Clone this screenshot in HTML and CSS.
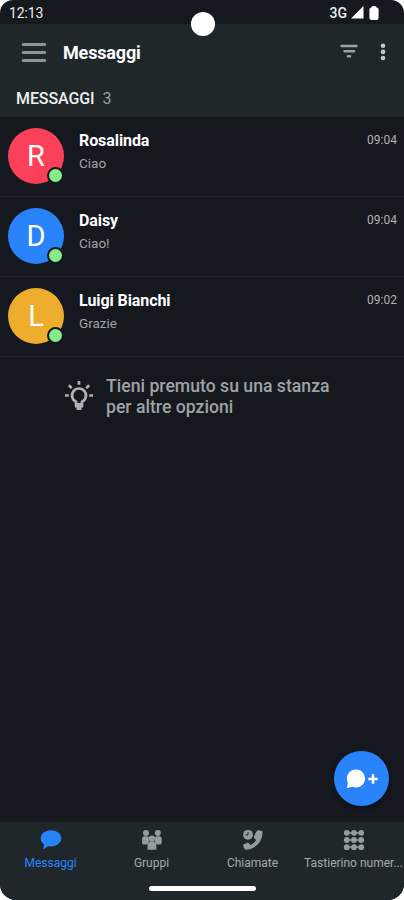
FILE: index.html
```html
<!DOCTYPE html>
<html lang="it">
<head>
<meta charset="utf-8">
<title>Messaggi</title>
<link rel="stylesheet" href="styles.css">
</head>
<body>
<div class="phone">
  <div class="status">
    <span class="clock">12:13</span>
    <span class="camera"></span>
    <span class="network">3G</span>
    <svg class="signal" width="13" height="13" viewBox="0 0 13 13"><path d="M12.500 0v12.500H0z"/></svg>
    <svg class="battery" width="10" height="14" viewBox="0 0 10 14"><path d="M2.500 1Q2.500 0 5 0t2.500 1v.6Q9.600 1.600 9.600 3.500v8Q9.600 14 7.500 14h-5Q.4 14 .4 11.500v-8Q.4 1.600 2.500 1.600z"/></svg>
  </div>
  <header class="appbar">
    <div class="burger"><i></i><i></i><i></i></div>
    <h1>Messaggi</h1>
    <svg class="filter" width="18" height="15" viewBox="0 0 18 15"><path d="M1.500 2h15M4.500 7.300h9.500M8 12.300h2"/></svg>
    <svg class="more" width="6" height="18" viewBox="0 0 6 18"><circle cx="3" cy="2.700" r="2.300"/><circle cx="3" cy="8.900" r="2.300"/><circle cx="3" cy="15" r="2.300"/></svg>
  </header>
  <div class="section"><span class="section-name">MESSAGGI</span><span class="count">3</span></div>
  <main>
    <div class="room">
      <div class="avatar red">R<i class="presence"></i></div>
      <div class="text"><div class="name">Rosalinda</div><div class="preview">Ciao</div></div>
      <time>09:04</time>
    </div>
    <div class="room">
      <div class="avatar blue">D<i class="presence"></i></div>
      <div class="text"><div class="name">Daisy</div><div class="preview">Ciao!</div></div>
      <time>09:04</time>
    </div>
    <div class="room">
      <div class="avatar amber">L<i class="presence"></i></div>
      <div class="text"><div class="name">Luigi Bianchi</div><div class="preview">Grazie</div></div>
      <time>09:02</time>
    </div>
    <div class="hint">
      <svg width="30" height="31" viewBox="0 0 30 31">
        <path class="line" d="M15 1v3.800M1 15.500h3.800M25.200 15.500H29M4.800 5.200l2.900 2.900M25.200 5.200l-2.900 2.900"/>
        <path class="line" d="M12 25.500v-3.700a7 7 0 1 1 6 0v3.700z"/>
        <path class="base" d="M11 23h8v4.500h-1.500V30h-5v-2.500H11z"/>
      </svg>
      <p>Tieni premuto su una stanza<br>per altre opzioni</p>
    </div>
  </main>
  <div class="fab">
    <svg width="32" height="22" viewBox="0 0 32 22"><path d="M10 1.500a9 9 0 1 1-3.500 17.300L.8 20l1.100-5.300A9 9 0 0 1 10 1.500z"/><path class="plus" d="M27 6.300v9.400M22.300 11h9.400"/></svg>
  </div>
  <nav>
    <div class="tab active">
      <svg width="22" height="22" viewBox="0 0 22 22"><path d="M11 1.200c5.800 0 10.300 3.600 10.300 8.100S16.800 17.400 11 17.400c-1 0-2-.1-3-.3-1.300 1.200-3 2.900-5.500 3 1-1.200 1.600-3.100 1.600-4.600C2 14 .7 11.800.7 9.300.7 4.800 5.200 1.200 11 1.200z"/></svg>
      <span>Messaggi</span>
    </div>
    <div class="tab">
      <svg width="22" height="22" viewBox="0 0 22 22"><circle cx="5" cy="4" r="3"/><circle cx="16.800" cy="4" r="3"/><path d="M1.100 14V10.600Q1.100 7.300 4 7.300h2.300l1.800 1.300Q7 10.500 8.200 12L6.300 15.500H2zM20.700 14V10.600q0-3.300-2.900-3.300h-2.300l-1.800 1.300q1.100 1.900-.1 3.400L15.500 15.500h4z"/><circle cx="10.900" cy="9.700" r="3.100"/><path d="M6.500 20.800v-4.700q0-3.300 3-3.300h2.800q3 0 3 3.300v4.700z"/></svg>
      <span>Gruppi</span>
    </div>
    <div class="tab">
      <svg width="22" height="22" viewBox="0 0 22 22"><circle cx="6" cy="5.800" r="4.900"/><path class="hands" d="M6 3v3H3.500"/><path d="M15.900 1.200 20.400 2c1.100 9.700-7 18.700-16.800 18.700-.9 0-2.500-3.700-2.500-4.600 0-.7 4.800-2.600 5.500-2.200l2 2.200c2.300-1.100 4.300-2.700 5.500-5.200L12 8.800C11.500 8 14.700 1.100 15.900 1.200z"/></svg>
      <span>Chiamate</span>
    </div>
    <div class="tab">
      <svg width="22" height="22" viewBox="0 0 22 22"><path class="link" d="M4 4h14M4 11h14M4 18h14"/><circle cx="3.800" cy="3.800" r="2.900"/><circle cx="11" cy="3.800" r="2.900"/><circle cx="18.200" cy="3.800" r="2.900"/><circle cx="3.800" cy="11" r="2.900"/><circle cx="11" cy="11" r="2.900"/><circle cx="18.200" cy="11" r="2.900"/><circle cx="3.800" cy="18.200" r="2.900"/><circle cx="11" cy="18.200" r="2.900"/><circle cx="18.200" cy="18.200" r="2.900"/></svg>
      <span>Tastierino numer...</span>
    </div>
    <div class="home"></div>
  </nav>
</div>
</body>
</html>
```
FILE: styles.css
```css
* { box-sizing: border-box; }
body { margin: 0; background: #fff; font-family: Roboto, "Liberation Sans", sans-serif; }
svg { display: block; flex: none; }
.phone {
  position: relative; width: 404px; height: 900px; overflow: hidden;
  display: flex; flex-direction: column; background: #15181f;
  border-radius: 13px 13px 16px 16px; white-space: nowrap;
}
.status { position: relative; height: 24px; flex: none; display: flex; align-items: center; padding: 1px 25px 0 9px; color: #eee; }
.clock { flex: 1; font-size: 14px; letter-spacing: -.1px; }
.network { font-size: 14px; font-weight: 500; margin-right: 4px; }
.signal { fill: #fff; margin-right: 5px; }
.battery { fill: #fff; }
.camera { position: absolute; left: 191px; top: 12px; width: 24px; height: 24px; border-radius: 50%; background: #fff; z-index: 1; }
.appbar { height: 56px; flex: none; background: #20272b; display: flex; align-items: center; padding: 0 18px 0 22px; }
.burger { width: 24px; height: 19px; display: flex; flex-direction: column; justify-content: space-between; margin-right: 17px; }
.burger i { height: 3px; background: #8e959d; border-radius: 1px; }
h1 { flex: 1; margin: 1px 0 0; font-size: 18px; line-height: 24px; letter-spacing: -.15px; font-weight: 700; color: #fff; }
.filter { margin: -2px 22px 0 0; stroke: #9aa3a6; stroke-width: 2.500; stroke-linecap: round; }
.more { fill: #c2c7c9; }
.section { height: 37px; flex: none; background: #20272b; padding: 0 16px; display: flex; align-items: center; font-size: 16px; color: #eef0f1; }
.section-name { font-weight: 500; letter-spacing: -.1px; margin-right: 8px; }
.count { color: #98a0a5; font-size: 16px; }
main { flex: 1; }
.room { height: 80px; border-bottom: 1px solid #1e2327; display: flex; align-items: flex-start; padding: 11px 7px 0 8px; }
.avatar { position: relative; width: 56px; height: 56px; border-radius: 50%; display: flex; align-items: center; justify-content: center; font-size: 29px; color: #fff; margin-right: 15px; }
.red { background: #fc4059; }
.blue { background: #2984fc; }
.amber { background: #eead2d; }
.presence { position: absolute; right: 0; bottom: 0; width: 17px; height: 17px; border-radius: 50%; background: #85ec86; border: 2px solid #15181f; }
.text { flex: 1; padding-top: 3px; }
.name { font-size: 16px; line-height: 20px; letter-spacing: -.08px; font-weight: 700; color: #fff; }
.preview { font-size: 13.500px; line-height: 18px; margin-top: 3px; color: #a0a4a8; }
time { font-size: 12px; line-height: 16px; margin-top: 4px; color: #afb2b5; }
.hint { display: flex; align-items: flex-start; padding: 18px 0 0 64px; color: #9ea3a6; }
.hint svg { margin: 5px 12px 0 0; }
.hint .line { fill: none; stroke: #b0b3b5; stroke-width: 2.700; }
.hint .base { fill: #b0b3b5; }
.hint p { margin: 1px 0 0; font-size: 17.650px; line-height: 21px; font-weight: 500; }
.fab { position: absolute; left: 334px; top: 751px; width: 55px; height: 55px; border-radius: 50%; background: #2984fc; display: flex; align-items: center; justify-content: center; fill: #fff; box-shadow: 0 2px 4px #0b0e13; }
.plus { stroke: #fff; stroke-width: 2.500; }
nav { position: relative; height: 78px; flex: none; background: #20272b; display: grid; grid-template-columns: repeat(4, 101px); }
.tab { display: flex; flex-direction: column; align-items: center; padding-top: 7px; color: #a4aaae; fill: #939c9f; font-size: 12px; line-height: 16px; }
.tab span { margin-top: 4px; }
.active { color: #2984fc; fill: #2984fc; }
.hands { fill: none; stroke: #20272b; stroke-width: 1; }
.link { stroke: #939c9f; stroke-width: 1.500; }
.home { position: absolute; left: 149px; top: 64px; width: 107px; height: 5px; border-radius: 3px; background: #fff; }
```
